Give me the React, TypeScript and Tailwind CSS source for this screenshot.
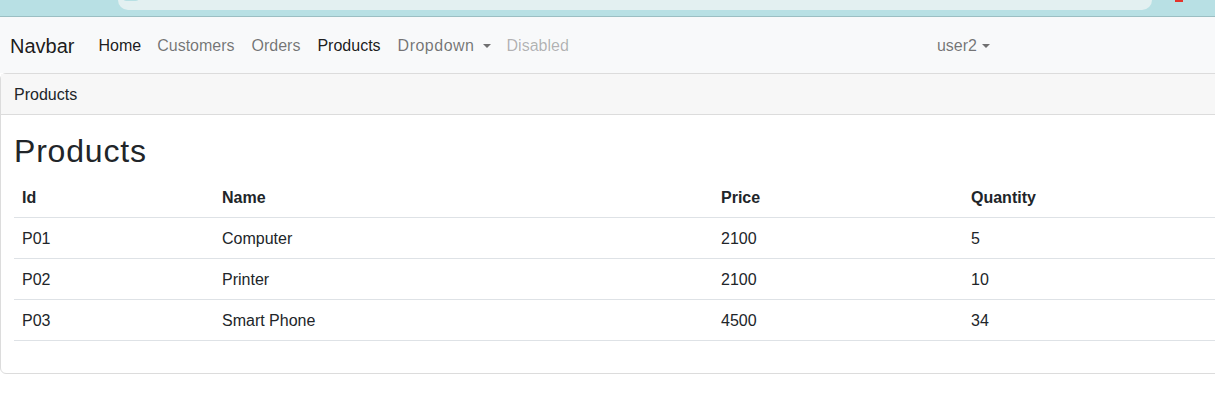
export default function App() {
  const products = [
    { id: "P01", name: "Computer", price: 2100, quantity: 5 },
    { id: "P02", name: "Printer", price: 2100, quantity: 10 },
    { id: "P03", name: "Smart Phone", price: 4500, quantity: 34 },
  ];

  const caret = (
    <span className="ml-[8px] inline-block w-0 h-0 border-x-[4.5px] border-x-transparent border-t-[4.5px] border-t-current align-middle" />
  );

  return (
    <div className="min-h-screen bg-white text-[#212529] font-['Liberation_Sans',Arial,sans-serif] text-[16px] overflow-x-hidden">
      {/* browser chrome strip */}
      <div className="h-[17px] bg-[#b8e0e4] border-b border-[#9bbfc3] flex relative overflow-hidden">
        <div className="ml-[118px] mr-[63px] flex-1 h-[10px] bg-[#e3f0f1] rounded-b-[10px] relative">
          <div className="absolute left-[2px] -top-[10px] w-[22px] h-[13px] rounded-full bg-[#b8e0e4] border-2 border-[#e3f0f1]" />
        </div>
        <div className="absolute left-[1175px] top-0 w-[8px] h-[2px] bg-[#e5332a]" />
      </div>

      {/* navbar */}
      <nav className="h-[56px] bg-[#f8f9fa] flex items-center pl-[10px] pt-[2px]">
        <span className="text-[20px] text-black/90 mr-[16px]">Navbar</span>
        <ul className="flex items-center">
          <li className="px-[8px] text-black/90">Home</li>
          <li className="px-[8px] text-black/55">Customers</li>
          <li className="px-[8px] ml-[1px] text-black/55">Orders</li>
          <li className="px-[8px] ml-[1px] text-black/90">Products</li>
          <li className="px-[8px] ml-[1px] text-black/55 flex items-center">
            <span className="tracking-[0.5px]">Dropdown</span>
            {caret}
          </li>
          <li className="px-[8px] text-black/30">Disabled</li>
        </ul>
        <div className="flex-1" />
        <div className="mr-[225px] text-black/55 flex items-center">
          user2
          <span className="ml-[5px] inline-block w-0 h-0 border-x-[4.5px] border-x-transparent border-t-[4.5px] border-t-current" />
        </div>
      </nav>

      {/* card */}
      <div className="w-[1240px] border border-[#dcdcdc] rounded-[6px]">
        <div className="bg-[#f7f7f7] border-b border-[#dcdcdc] h-[41px] flex items-center px-[13px] pt-[2px]">
          Products
        </div>
        <div className="px-[13px] pt-[17px] pb-[16px]">
          <h1 className="text-[32px] leading-[1.2] font-medium tracking-[0.8px] mb-[7px]">Products</h1>
          <table className="w-full border-collapse mb-[16px]">
            <thead>
              <tr className="border-b border-[#dee2e6]">
                <th className="w-[200px] text-left font-bold px-[8px] pt-[9px] pb-[7px] leading-[24px]">Id</th>
                <th className="w-[499px] text-left font-bold px-[8px] pt-[9px] pb-[7px] leading-[24px]">Name</th>
                <th className="w-[250px] text-left font-bold px-[8px] pt-[9px] pb-[7px] leading-[24px]">Price</th>
                <th className="text-left font-bold px-[8px] pt-[9px] pb-[7px] leading-[24px]">Quantity</th>
              </tr>
            </thead>
            <tbody>
              {products.map((p) => (
                <tr key={p.id} className="border-b border-[#dee2e6]">
                  <td className="px-[8px] pt-[9px] pb-[7px] leading-[24px]">{p.id}</td>
                  <td className="px-[8px] pt-[9px] pb-[7px] leading-[24px]">{p.name}</td>
                  <td className="px-[8px] pt-[9px] pb-[7px] leading-[24px]">{p.price}</td>
                  <td className="px-[8px] pt-[9px] pb-[7px] leading-[24px]">{p.quantity}</td>
                </tr>
              ))}
            </tbody>
          </table>
        </div>
      </div>
    </div>
  );
}
